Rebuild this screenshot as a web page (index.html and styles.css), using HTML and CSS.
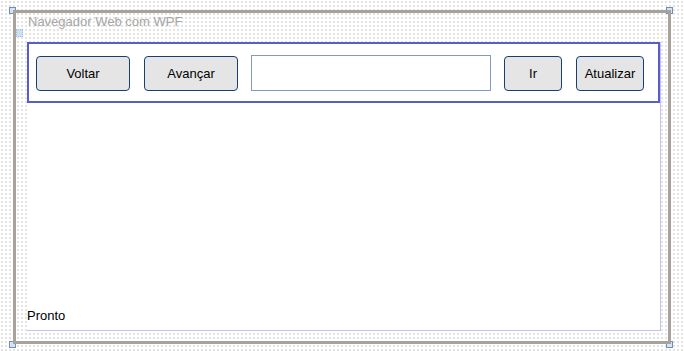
FILE: index.html
```html
<!DOCTYPE html>
<html lang="pt">

<head>
    <meta charset="UTF-8" />
    <meta name="viewport" content="width=device-width, initial-scale=1.0" />
    <title>Navegador Web com WPF</title>
    <link rel="stylesheet" href="styles.css">
</head>

<body>
    <div class="canvas">
        <!-- alças de redimensionamento -->
        <span class="handle h-tl"></span>
        <span class="handle h-tr"></span>
        <span class="handle h-bl"></span>
        <span class="handle h-br"></span>

        <div class="frame">
            <div class="title">Navegador Web com WPF</div>
            <span class="move"></span>
            <div class="window">
                <div class="toolbar">
                    <a class="btn btn-voltar" href="javascript:;">Voltar</a>
                    <a class="btn btn-avancar" href="javascript:;">Avançar</a>
                    <input class="url" type="text" />
                    <a class="btn btn-ir" href="javascript:;">Ir</a>
                    <a class="btn btn-atualizar" href="javascript:;">Atualizar</a>
                </div>
                <div class="content"></div>
                <div class="status">Pronto</div>
            </div>
        </div>
    </div>
</body>

</html>
```

FILE: styles.css
```css
* {
    margin: 0;
    padding: 0;
    box-sizing: border-box;
}

body {
    width: 684px;
    height: 351px;
    overflow: hidden;
    background-color: #fff;
    /* pontos da grade do designer */
    background-image: radial-gradient(circle at 2px 2px, #cfcfcf 0.5px, transparent 1px);
    background-size: 4px 4px;
    font-family: "Liberation Sans", Arial, sans-serif;
}

.canvas {
    position: relative;
    width: 684px;
    height: 351px;
    padding: 10px 0 0 13px;
}

/* 
    moldura da janela
*/
.frame {
    width: 658px;
    height: 334px;
    border: 3px solid #a8a29c;
    display: flex;
    flex-direction: column;
    position: relative;
}

.title {
    font-size: 13px;
    color: #a6a6a6;
    padding: 1px 0 0 12px;
    height: 29px;
    line-height: 15px;
}

.move {
    position: absolute;
    left: 0;
    top: 16px;
    width: 7px;
    height: 8px;
    background: #cfe0f2;
    border: 1px dotted #9fbbe0;
}

.window {
    margin-left: 11px;
    width: 634px;
    height: 289px;
    background: #fff;
    border-right: 1px solid #c4c4f0;
    border-bottom: 1px solid #c4c4f0;
    display: flex;
    flex-direction: column;
}

/* 
    barra de navegação
*/
.toolbar {
    height: 61px;
    border: 2px solid #5c5cc8;
    display: flex;
    align-items: flex-start;
    padding: 12px 0 0 7px;
}

.btn {
    height: 35px;
    display: flex;
    align-items: center;
    justify-content: center;
    font-size: 13px;
    color: #000;
    text-decoration: none;
    border: 1.5px solid #173f73;
    border-radius: 4px;
    background-color: #fcfcfc;
    background-image: radial-gradient(circle at 1px 1px, #d4d4d4 0.5px, transparent 1px);
    background-size: 2px 2px;
}

.btn-voltar {
    width: 94px;
}

.btn-avancar {
    width: 94px;
    margin-left: 14px;
}

.url {
    width: 240px;
    height: 36px;
    margin: -1px 0 0 13px;
    border: 1px solid #7f9bbf;
    background: #fff;
    outline: none;
}

.btn-ir {
    width: 58px;
    margin-left: 13px;
}

.btn-atualizar {
    width: 68px;
    margin-left: 14px;
}

.content {
    flex: 1;
}

.status {
    font-size: 13px;
    color: #000;
    height: 22px;
    line-height: 16px;
}

/* 
    alças nos cantos
*/
.handle {
    position: absolute;
    width: 7px;
    height: 7px;
    background: #d6e3f2;
    border: 1px solid #6f8fb5;
}

.h-tl {
    left: 9px;
    top: 7px;
}

.h-tr {
    left: 666px;
    top: 7px;
}

.h-bl {
    left: 9px;
    top: 341px;
}

.h-br {
    left: 666px;
    top: 341px;
}
```
